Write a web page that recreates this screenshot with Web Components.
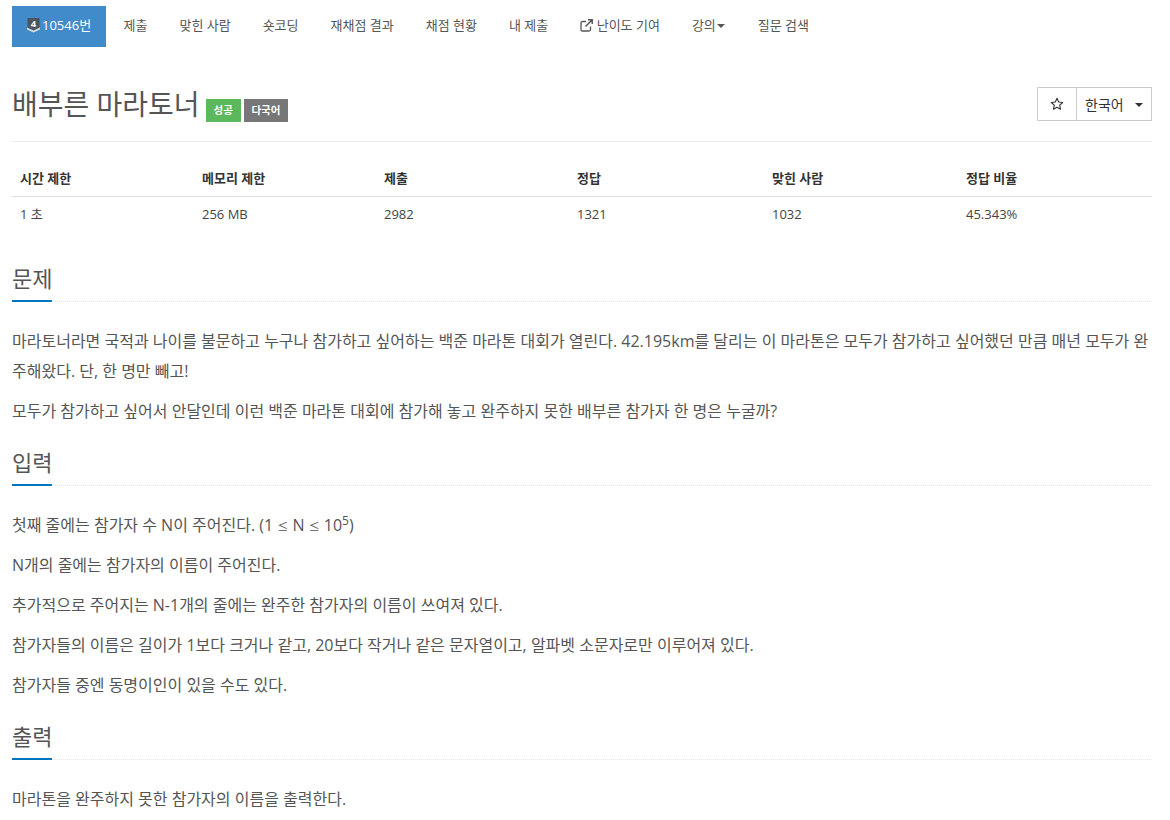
<!DOCTYPE html>
<html lang="ko"><head><meta charset="utf-8"><title>10546</title>
<style>
html,body{margin:0;padding:0;background:#fff}
body{font-family:"Open Sans","Noto Sans CJK KR",sans-serif;color:#555;font-size:14px;overflow:hidden;height:820px}
sup{line-height:0;font-size:75%;vertical-align:super}
.le{font-family:"Noto Sans CJK KR",sans-serif;font-size:11px;line-height:0}
</style></head><body>
<boj-page>
<boj-nav></boj-nav>
<boj-header></boj-header>
<boj-stats></boj-stats>
<boj-section heading="문제" style="--top:30px">
<p>마라토너라면 국적과 나이를 불문하고 누구나 참가하고 싶어하는 백준 마라톤 대회가 열린다. 42.195km를 달리는 이 마라톤은 모두가 참가하고 싶어했던 만큼 매년 모두가 완주해왔다. 단, 한 명만 빼고!</p>
<p>모두가 참가하고 싶어서 안달인데 이런 백준 마라톤 대회에 참가해 놓고 완주하지 못한 배부른 참가자 한 명은 누굴까?</p>
</boj-section>
<boj-section heading="입력">
<p>첫째 줄에는 참가자 수 N이 주어진다. (1 <span class="le">≤</span> N <span class="le">≤</span> 10<sup>5</sup>)</p>
<p>N개의 줄에는 참가자의 이름이 주어진다.</p>
<p>추가적으로 주어지는 N-1개의 줄에는 완주한 참가자의 이름이 쓰여져 있다.</p>
<p>참가자들의 이름은 길이가 1보다 크거나 같고, 20보다 작거나 같은 문자열이고, 알파벳 소문자로만 이루어져 있다.</p>
<p>참가자들 중엔 동명이인이 있을 수도 있다.</p>
</boj-section>
<boj-section heading="출력">
<p>마라톤을 완주하지 못한 참가자의 이름을 출력한다.</p>
</boj-section>
</boj-page>
<script>
const def=(n,html)=>customElements.define(n,class extends HTMLElement{
  connectedCallback(){ if(this.shadowRoot)return; const s=this.attachShadow({mode:'open'});
    s.innerHTML=typeof html==='function'?html(this):html; }
});
def('boj-page',`<style>:host{display:block;padding:6px 18px 0 12px;width:1140px}</style><slot></slot>`);
def('boj-nav',`<style>
:host{display:flex;height:41px;font-size:13px;color:#555;line-height:39px}
a{display:flex;align-items:center;padding:0 16px 2px;white-space:nowrap;gap:0}
a.on{background:#428bca;color:#fff;padding:0 14px 2px 15px;width:65px;font-size:13px;gap:2px;margin-right:1.500px}
a.on svg{flex:none}
.caret{display:inline-block;width:0;height:0;border-left:4px solid transparent;border-right:4px solid transparent;border-top:4px solid #555;margin-left:1px;margin-top:1px}
.ext{margin-right:4px}
</style>
<a class="on"><svg width="13" height="15" viewBox="0 0 13 15"><path d="M.5 0h12v10.500l-6 3-6-3z" fill="#4a5561"/><path d="M0 9.500l6.500 3 6.500-3v2l-6.500 3-6.500-3z" fill="#d5dbe0"/><text x="6.500" y="9" font-size="9.500" font-weight="700" text-anchor="middle" fill="#fff" font-family="Open Sans">4</text></svg>10546번</a>
<a>제출</a><a>맞힌 사람</a><a>숏코딩</a><a>재채점 결과</a><a>채점 현황</a><a>내 제출</a>
<a style="margin-left:-.5px"><svg class="ext" width="13" height="13" viewBox="0 0 13 13" fill="none" stroke="#555" stroke-width="1.300"><path d="M10.500 7.500v3a1.500 1.500 0 0 1-1.500 1.500H2.500A1.500 1.500 0 0 1 1 10.500V4a1.500 1.500 0 0 1 1.500-1.500h3.500"/><path d="M5.500 7.500L12 1M8 .8h4.200V5" stroke-width="1.500"/></svg>난이도 기여</a>
<a>강의<span class="caret"></span></a><a style="margin-left:1px">질문 검색</a>`);
def('boj-header',`<style>
:host{display:flex;justify-content:space-between;align-items:flex-start;margin-top:26px;height:68px;border-bottom:1px solid #eee}
h1{margin:0;font-weight:400;font-size:28px;line-height:62px;color:#555;display:flex;align-items:center;height:62px}
.b{display:inline-block;height:23px;line-height:23px;padding:0 8px;font-size:10.500px;font-weight:700;color:#fff;background:#5cb85c;margin-left:3px;margin-top:12px}
.b:first-of-type{margin-left:6px}
.g{background:#777;padding:0 7.500px}
.grp{display:flex;margin-top:14px;height:34px;font-size:14px;color:#333;box-sizing:border-box;border:1px solid #ccc}
.star{width:39px;box-sizing:border-box;display:flex;align-items:center;justify-content:center;border-right:1px solid #ccc}
.lang{width:74px;display:flex;align-items:center;padding-left:8px;box-sizing:border-box;gap:11px;color:#333}
.caret{width:0;height:0;border-left:4px solid transparent;border-right:4px solid transparent;border-top:4px solid #333;margin-top:2px}
</style>
<h1>배부른 마라토너<span class="b">성공</span><span class="b g">다국어</span></h1>
<div class="grp"><div class="star"><svg width="14" height="14" viewBox="0 0 14 14"><path d="M7 1.300l1.700 3.700 4 .5-3 2.700.8 4L7 10.300 3.500 12.200l.8-4-3-2.700 4-.5z" fill="none" stroke="#333" stroke-width="1.100" stroke-linejoin="round"/></svg></div><div class="lang">한국어<span class="caret"></span></div></div>`);
def('boj-stats',`<style>
:host{display:grid;grid-template-columns:182px 182px 193px 195px 194px 1fr;margin-top:18px;font-size:13px;color:#333}
div{padding:0 8px;box-sizing:border-box}
.h{font-weight:700;height:37px;line-height:37px;border-bottom:1px solid #ddd;color:#333}
.c{height:36px;line-height:35px;color:#444}
</style>
<div class="h">시간 제한</div><div class="h">메모리 제한</div><div class="h">제출</div><div class="h">정답</div><div class="h">맞힌 사람</div><div class="h">정답 비율</div>
<div class="c">1 초</div><div class="c">256 MB</div><div class="c">2982</div><div class="c">1321</div><div class="c">1032</div><div class="c">45.343%</div>`);
def('boj-section',el=>`<style>
:host{display:block;margin-top:var(--top,21px)}
h2{margin:0;font-size:22px;font-weight:400;color:#555;line-height:30px;height:39px;box-sizing:border-box;border-bottom:1px dotted #e6e6e6}
h2 span{display:inline-block;height:39px;border-bottom:2px solid #0076c0;box-sizing:border-box}
.body{padding-top:24px}
::slotted(p){margin:0 0 10px;font-size:16px;line-height:30px;color:#555}
</style><h2><span>${el.getAttribute('heading')}</span></h2><div class="body"><slot></slot></div>`);
</script>
</body></html>
